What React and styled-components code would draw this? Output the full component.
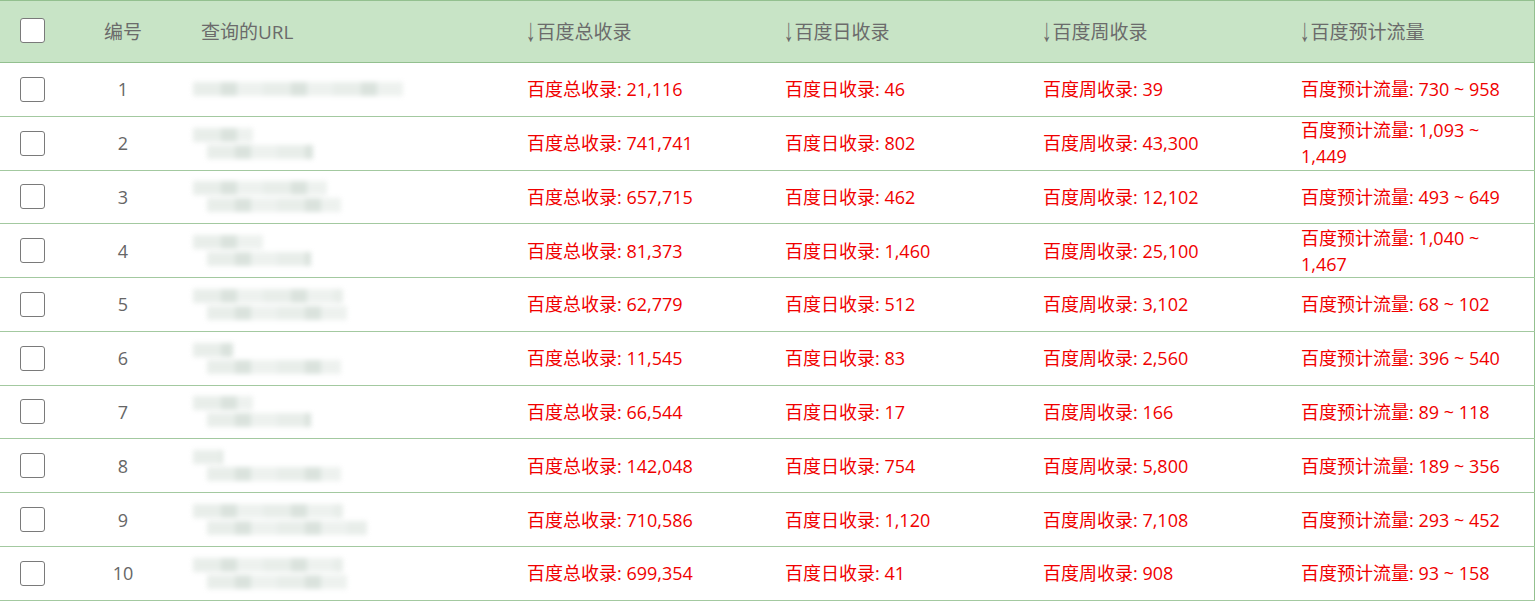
import React from "react";
import styled, { createGlobalStyle } from "styled-components";

const GlobalStyle = createGlobalStyle`
  body {
    margin: 0;
    background: #fff;
    font-family: "Open Sans", "Noto Sans CJK SC", sans-serif;
  }
`;

const rows = [
  { id: 1, total: "21,116", day: "46", week: "39", flow: "730 ~ 958", url: [210, 0] },
  { id: 2, total: "741,741", day: "802", week: "43,300", flow: "1,093 ~ 1,449", url: [60, 106] },
  { id: 3, total: "657,715", day: "462", week: "12,102", flow: "493 ~ 649", url: [134, 134] },
  { id: 4, total: "81,373", day: "1,460", week: "25,100", flow: "1,040 ~ 1,467", url: [70, 104] },
  { id: 5, total: "62,779", day: "512", week: "3,102", flow: "68 ~ 102", url: [150, 140] },
  { id: 6, total: "11,545", day: "83", week: "2,560", flow: "396 ~ 540", url: [40, 134] },
  { id: 7, total: "66,544", day: "17", week: "166", flow: "89 ~ 118", url: [60, 104] },
  { id: 8, total: "142,048", day: "754", week: "5,800", flow: "189 ~ 356", url: [30, 134] },
  { id: 9, total: "710,586", day: "1,120", week: "7,108", flow: "293 ~ 452", url: [150, 160] },
  { id: 10, total: "699,354", day: "41", week: "908", flow: "93 ~ 158", url: [150, 140] },
];

const Table = styled.table`
  width: 1535px;
  border-collapse: collapse;
  table-layout: fixed;
  border-top: 1px solid #93c08f;
  border-right: 1px solid #93c08f;
  font-size: 18px;
`;

const HeadRow = styled.tr`
  height: 62px;
  background: #c8e4c6;
  border-bottom: 1px solid #93c08f;
`;

const HeadCell = styled.th`
  font-weight: normal;
  font-size: 19px;
  color: #6b6b6b;
  text-align: ${(p) => (p.$center ? "center" : "left")};
  padding: 0 ${(p) => (p.$center ? "0" : "20px")};
  padding-bottom: 2px;
  white-space: nowrap;
`;

const Arrow = styled.span`
  display: inline-block;
  font-family: "Liberation Mono", "Noto Sans CJK SC", monospace;
  margin-left: -2px;
  transform: scaleY(1.7) translateY(-1px);
`;

const Row = styled.tr`
  height: 53.78px;
  border-bottom: 1px solid #a3c9a0;
`;

const Cell = styled.td`
  color: ${(p) => (p.$red ? "#f00000" : "#666")};
  text-align: ${(p) => (p.$center ? "center" : "left")};
  padding: 0 ${(p) => (p.$center ? "0" : "20px")};
  line-height: 26px;
  vertical-align: middle;
`;

const Box = styled.span`
  display: block;
  width: 23px;
  height: 23px;
  border: 1px solid #7a7a7a;
  border-radius: 3px;
  background: #fff;
`;

const Blur = styled.div`
  display: flex;
  flex-direction: column;
  gap: 3px;
  margin-left: -8px;
  filter: blur(2.5px);
  opacity: 0.7;
`;

const BlurLine = styled.div`
  height: 14px;
  background: repeating-linear-gradient(
    90deg,
    #dfe6e1 0 28px,
    #cbd7cf 28px 44px,
    #e6ece8 44px 70px
  );
`;

const UrlBlur = ({ widths }) => (
  <Blur>
    {widths.map((w, i) =>
      w ? <BlurLine key={i} style={{ width: w, marginLeft: i ? 14 : 0 }} /> : null
    )}
  </Blur>
);

const cols = ["百度总收录", "百度日收录", "百度周收录", "百度预计流量"];

export default function App() {
  return (
    <>
      <GlobalStyle />
      <Table>
        <colgroup>
          <col style={{ width: 65 }} />
          <col style={{ width: 116 }} />
          <col style={{ width: 326 }} />
          <col style={{ width: 258 }} />
          <col style={{ width: 258 }} />
          <col style={{ width: 258 }} />
          <col />
        </colgroup>
        <thead>
          <HeadRow>
            <HeadCell>
              <Box />
            </HeadCell>
            <HeadCell $center>编号</HeadCell>
            <HeadCell>查询的URL</HeadCell>
            {cols.map((c) => (
              <HeadCell key={c}>
                <Arrow>↓</Arrow>
                {c}
              </HeadCell>
            ))}
          </HeadRow>
        </thead>
        <tbody>
          {rows.map((r) => (
            <Row key={r.id}>
              <Cell>
                <Box />
              </Cell>
              <Cell $center>{r.id}</Cell>
              <Cell>
                <UrlBlur widths={r.url} />
              </Cell>
              <Cell $red>百度总收录: {r.total}</Cell>
              <Cell $red>百度日收录: {r.day}</Cell>
              <Cell $red>百度周收录: {r.week}</Cell>
              <Cell $red>百度预计流量: {r.flow}</Cell>
            </Row>
          ))}
        </tbody>
      </Table>
    </>
  );
}
